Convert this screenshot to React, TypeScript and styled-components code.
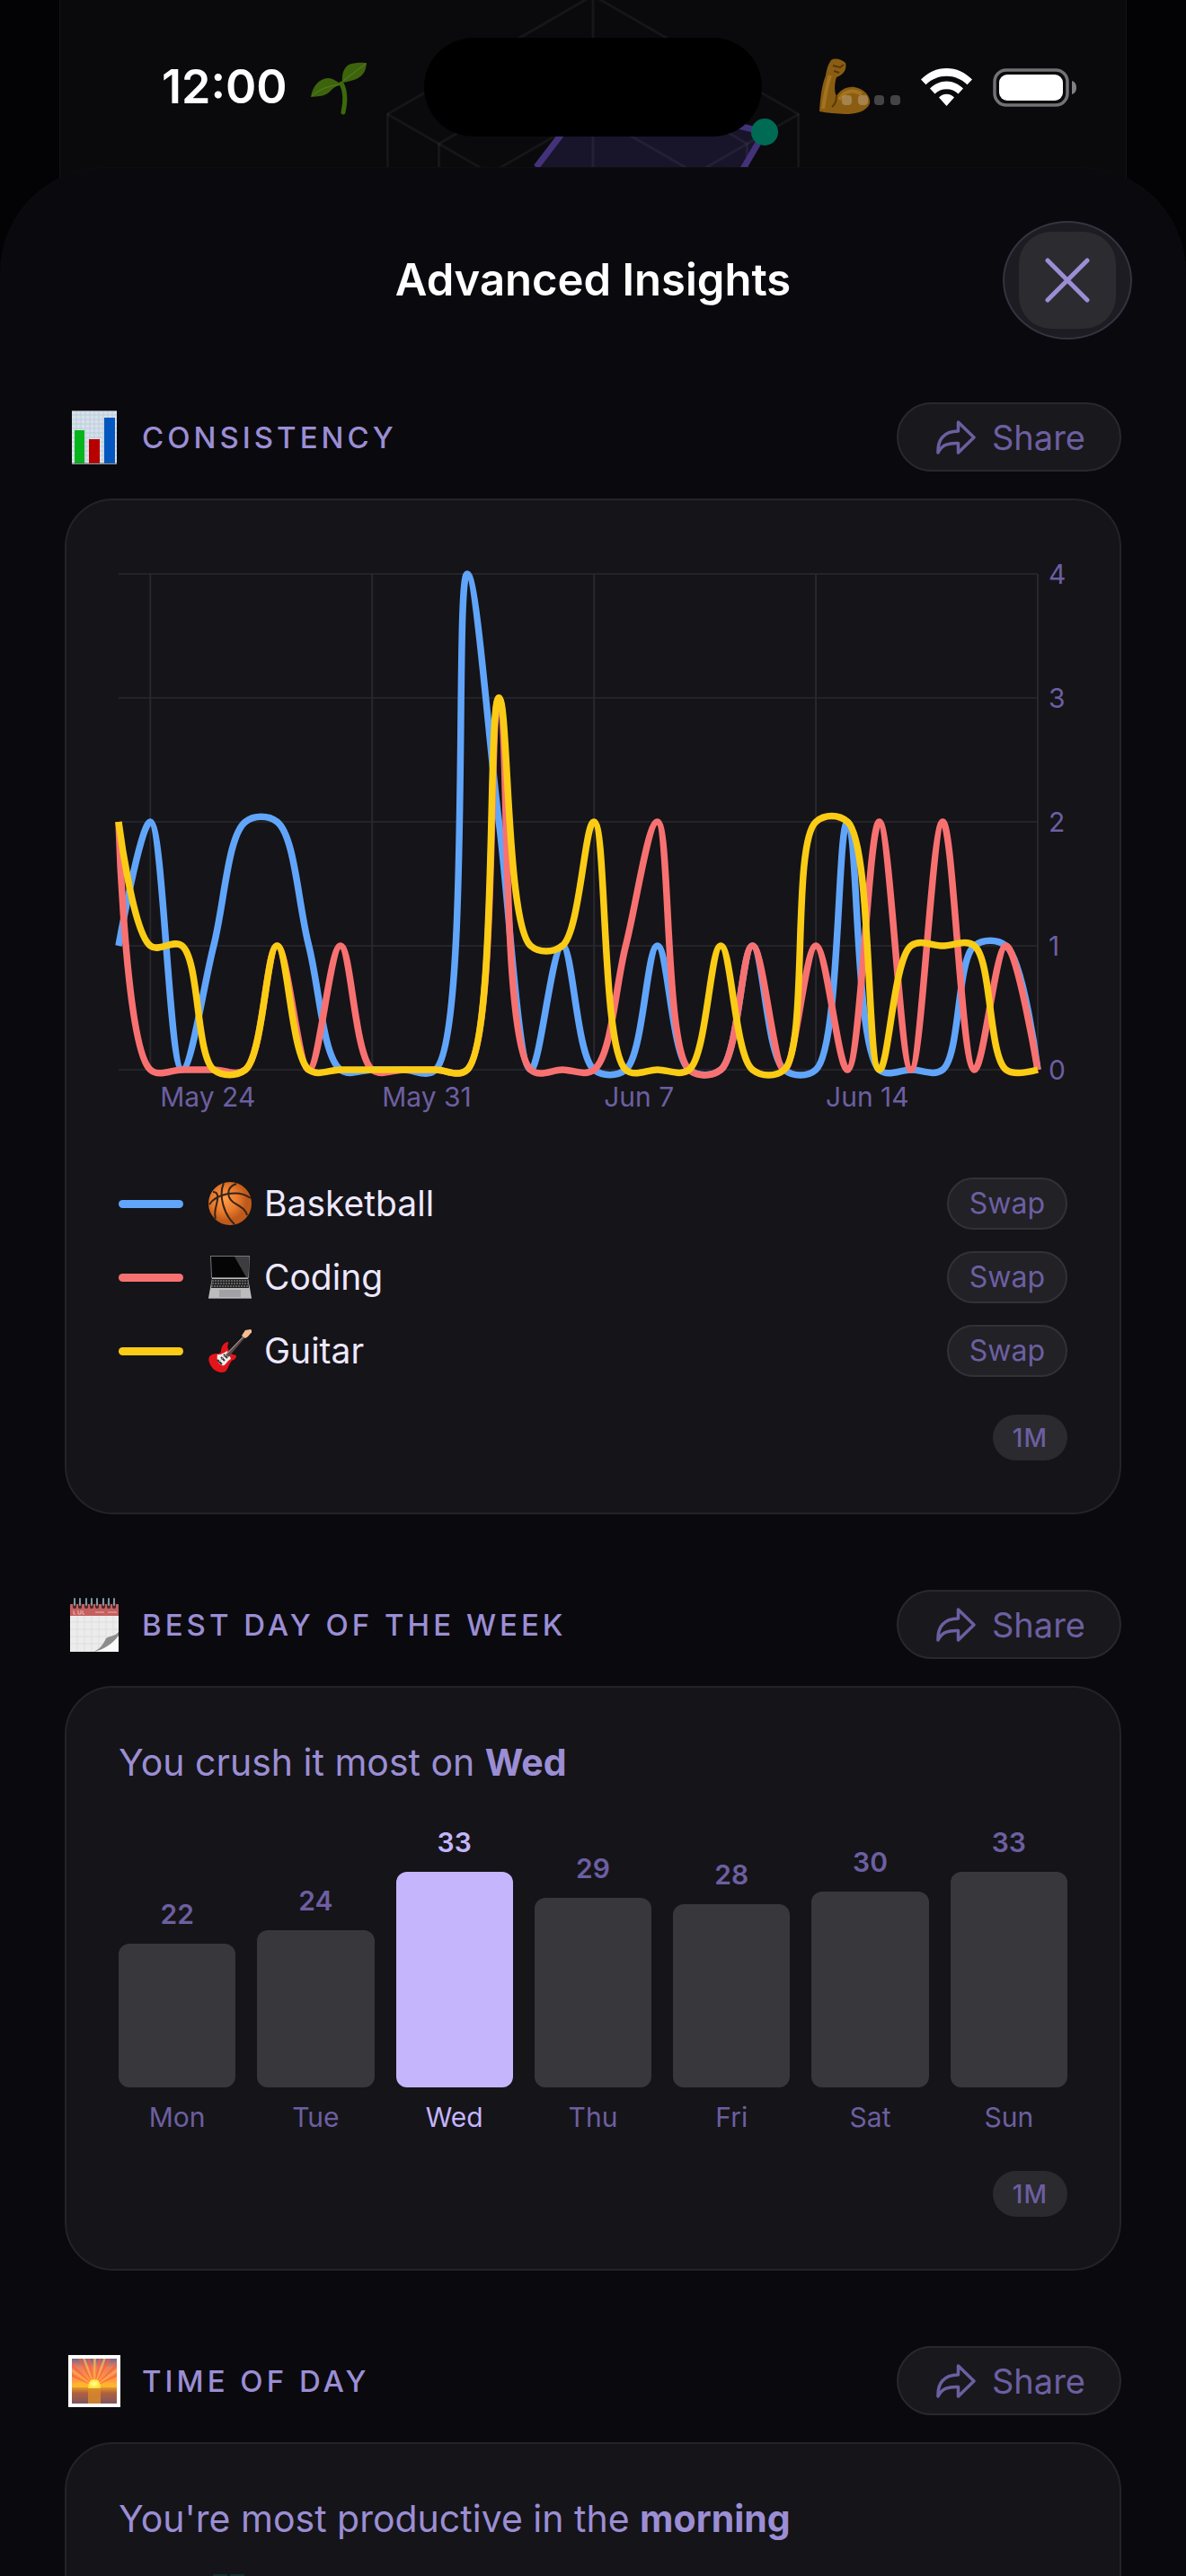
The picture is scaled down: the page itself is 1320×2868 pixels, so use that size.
import React from "react";
import styled, { createGlobalStyle } from "styled-components";

const color = {
  sheet: "#0a090e",
  card: "#151418",
  cardLine: "#242327",
  lilac: "#9b8ed4",
  muted: "#6c5fa1",
  accent: "#c4b5fd",
  text: "#ede8ff",
  blue: "#60a5fa",
  red: "#f87171",
  yellow: "#facc15",
};

const GlobalStyle = createGlobalStyle`
  *, *::before, *::after { box-sizing: border-box; }
  body {
    margin: 0;
    background: #030305;
    font-family: Inter, "Liberation Sans", sans-serif;
    color: ${color.text};
  }
  button { font: inherit; margin: 0; padding: 0; cursor: pointer; }
  svg { display: block; flex: none; }
`;

const Screen = styled.div`
  position: relative;
  display: flex;
  flex-direction: column;
  height: 100vh;
  overflow: hidden;
`;

/* The page behind the sheet, dimmed */
const Backdrop = styled.div`
  position: absolute;
  inset: 0 66px auto;
  height: 320px;
  display: flex;
  justify-content: center;
  background: #0a0a0c;
  border: solid #131315;
  border-width: 0 1px;
`;

const StatusBar = styled.header`
  position: relative;
  display: grid;
  grid-template-columns: 1fr 376px 1fr;
  align-items: center;
  padding: 42px 0 34px;
`;

const Time = styled.time`
  padding-left: 180px;
  font-size: 52px;
  line-height: 60px;
  font-weight: 600;
  color: #fff;
`;

const Island = styled.div`
  height: 110px;
  border-radius: 55px;
  background: #000;
`;

const StatusIcons = styled.div`
  display: flex;
  align-items: center;
  justify-content: flex-end;
  gap: 23px;
  padding-right: 122px;
`;

const Sheet = styled.main`
  position: relative;
  flex: 1;
  min-height: 0;
  overflow: hidden;
  border-radius: 118px 118px 0 0;
  background: ${color.sheet};
  box-shadow: inset 0 1px 0 #0e0e12;
`;

const SheetHeader = styled.div`
  display: grid;
  grid-template-columns: 1fr auto 1fr;
  align-items: center;
  padding: 60px 60px 0;
`;

const SheetTitle = styled.h1`
  grid-column: 2;
  margin: 0;
  font-size: 49px;
  line-height: 60px;
  font-weight: 600;
  color: #fff;
`;

const CloseButton = styled.button`
  justify-self: end;
  display: grid;
  place-items: center;
  width: 144px;
  height: 132px;
  border: 2px solid #34333f;
  border-radius: 72px / 66px;
  background: #1d1c22;
`;

const CloseFace = styled.span`
  display: grid;
  place-items: center;
  width: 108px;
  height: 108px;
  border-radius: 36px;
  background: #2c2b30;
`;

const Content = styled.div`
  display: flex;
  flex-direction: column;
  gap: 84px;
  padding: 70px 72px 0;
`;

const Section = styled.section`
  display: flex;
  flex-direction: column;
  gap: 30px;
`;

const SectionHeader = styled.div`
  display: flex;
  align-items: center;
  gap: 20px;
`;

const SectionTitle = styled.h2`
  flex: 1;
  margin: 0;
  font-size: 33px;
  line-height: 40px;
  font-weight: 500;
  letter-spacing: 4px;
  text-transform: uppercase;
  color: ${color.lilac};
`;

const ShareButton = styled.button`
  display: flex;
  align-items: center;
  gap: 18px;
  height: 77px;
  padding: 0 38px 0 42px;
  border: 2px solid #29282c;
  border-radius: 39px;
  background: #19181c;
  && { font-size: 38px; line-height: 48px; }
  color: ${color.muted};
`;

const Card = styled.div`
  display: flex;
  flex-direction: column;
  padding: 58px;
  border: 2px solid ${color.cardLine};
  border-radius: 54px;
  background: ${color.card};
`;

const ChartSvg = styled.svg`
  width: 100%;
  height: auto;
  overflow: visible;
`;

const AxisText = styled.text`
  font-size: 30px;
  fill: ${color.muted};
`;

const Legend = styled.ul`
  display: flex;
  flex-direction: column;
  gap: 24px;
  margin: 66px 0 0;
  padding: 0;
  list-style: none;
`;

const LegendRow = styled.li`
  display: flex;
  align-items: center;
  height: 58px;
`;

const Swatch = styled.span<{ $tone: string }>`
  width: 72px;
  height: 9px;
  margin-right: 28px;
  border-radius: 5px;
  background: ${(p) => p.$tone};
`;

const LegendName = styled.span`
  flex: 1;
  margin-left: 14px;
  font-size: 39px;
  line-height: 48px;
  color: ${color.text};
`;

const SwapButton = styled.button`
  height: 58px;
  && { padding: 0 23px; font-size: 32px; line-height: 40px; }
  border: 2px solid #323136;
  border-radius: 29px;
  background: #222126;
  color: ${color.muted};
`;

const RangeButton = styled.button`
  align-self: flex-end;
  height: 51px;
  margin-top: 42px;
  && { padding: 0 22px; font-size: 28px; line-height: 34px; font-weight: 500; }
  border: 0;
  border-radius: 26px;
  background: #2b2a2f;
  letter-spacing: 1px;
  color: ${color.muted};
`;

const Insight = styled.p`
  margin: 0;
  font-size: 41px;
  line-height: 50px;
  color: ${color.lilac};

  strong { font-weight: 700; }
`;

const Week = styled.ol`
  display: grid;
  grid-template-columns: repeat(7, 1fr);
  column-gap: 24px;
  align-items: end;
  margin: 46px 0 0;
  padding: 0;
  list-style: none;
`;

const Day = styled.li<{ $best: boolean }>`
  display: flex;
  flex-direction: column;
  gap: 15px;
  text-align: center;
  font-size: 30px;
  line-height: 36px;
  color: ${(p) => (p.$best ? color.accent : color.muted)};

  b { font-weight: 600; }
`;

const Bar = styled.div<{ $best: boolean }>`
  border-radius: 12px;
  background: ${(p) => (p.$best ? color.accent : "#38373b")};
`;

const Scene = styled.div`
  display: flex;
  gap: 3px;
  margin: 37px 0 0 105px;
`;

const SceneBlock = styled.span`
  width: 16px;
  height: 60px;
  background: #12302f;
`;

/* ---------- drawings ---------- */

const hexagon = (r: number) =>
  [0, 1, 2, 3, 4, 5]
    .map((i) => {
      const a = ((i * 60 - 90) * Math.PI) / 180;
      return `${(594 + r * Math.cos(a)).toFixed(1)},${(259 + r * Math.sin(a)).toFixed(1)}`;
    })
    .join(" ");

const Radar = () => (
  <svg width="1188" height="320" viewBox="0 0 1188 320" aria-hidden="true">
    <path d="M594 101L785 147L700 287H450Z" fill="#18142a" />
    <g fill="none" stroke="#fff" strokeOpacity="0.05" strokeWidth="3">
      {[264, 198, 132].map((r) => (
        <polygon key={r} points={hexagon(r)} />
      ))}
      <path d="M594 -5V259M365 127L594 259L823 127" />
    </g>
    <path d="M531 186L557 152L594 101L785 147L761 188" fill="none" stroke="#43327a" strokeWidth="7" />
    <circle cx="785" cy="147" r="15" fill="#006b55" />
    <g>
      <path d="M315 92C314 82 317 73 325 71C333 69 341 70 342 70C341 84 334 89 315 92Z" fill="#3d640c" />
      <path d="M280 108C282 95 290 87 300 87C307 88 310 92 315 94C308 95 305 98 300 103C294 108 287 107 280 108Z" fill="#3d640c" />
      <path d="M316 90L341 71M281 107Q292 96 314 94" fill="none" stroke="#56802a" strokeWidth="1" />
      <path d="M314 93C319 102 318 116 316 125" fill="none" stroke="#3b6a0b" strokeWidth="5" strokeLinecap="round" />
    </g>
    <g>
      <path
        d="M846 124C847 108 849 94 853 84C854 78 855 73 859 67C863 64 871 66 875 70C877 77 873 83 865 86C862 95 863 104 865 107C869 100 877 96 885 97C896 99 903 107 902 115C898 125 886 127 874 127C865 126 855 126 846 124Z"
        fill="#8a5d12"
      />
      <path d="M850 121C852 108 854 95 858 84M868 111C873 101 884 99 893 105" fill="none" stroke="#a3731f" strokeWidth="4" />
      <path d="M861 73L869 75L873 72M862 79L868 81M865 107Q865 115 860 119" fill="none" stroke="#583706" strokeWidth="2" />
    </g>
  </svg>
);

const Signal = () => (
  <svg width="65" height="42" viewBox="0 0 65 42" aria-hidden="true">
    {[0, 18, 36, 54].map((x) => (
      <rect key={x} x={x} y="30" width="11" height="11" rx="4" fill="#fff" opacity="0.24" />
    ))}
  </svg>
);

const Wifi = () => (
  <svg width="57" height="42" viewBox="0 0 57 42" aria-hidden="true" fill="#fff">
    <path d="M28.500 0C39.500 0 49 4.500 57 12.500L51.500 18.300C45 12 37 8.800 28.500 8.800C20 8.800 12 12 5.500 18.300L0 12.500C8 4.500 17.500 0 28.500 0Z" />
    <path d="M28.500 14.500C35.500 14.500 42 17.500 47 22.500L41.500 28.500C38 25 33.500 23.300 28.500 23.300C23.500 23.300 19 25 15.500 28.500L10 22.500C15 17.500 21.500 14.500 28.500 14.500Z" />
    <path d="M28.500 28.800C32 28.800 35 30.500 37 32.500L28.500 42L20 32.500C22 30.500 25 28.800 28.500 28.800Z" />
  </svg>
);

const Battery = () => (
  <svg width="93" height="43" viewBox="0 0 93 43" aria-hidden="true">
    <rect x="2" y="2" width="81" height="39" rx="13" fill="none" stroke="#727274" strokeWidth="3.500" />
    <rect x="7" y="7" width="71" height="29" rx="9" fill="#fff" />
    <path d="M88 14C91.500 15 93 18 93 21.500S91.500 28 88 29Z" fill="#808082" />
  </svg>
);

const CloseIcon = () => (
  <svg width="50" height="50" viewBox="0 0 50 50" aria-hidden="true">
    <path d="M3 3L47 47M47 3L3 47" stroke={color.lilac} strokeWidth="5" strokeLinecap="round" />
  </svg>
);

const ShareIcon = () => (
  <svg width="44" height="38" viewBox="0 0 44 38" aria-hidden="true">
    <path
      d="M24.500 2L42 19L24.500 36V25.500C14 25 6.500 27 2 36C1.500 22 8 12 24.500 12Z"
      fill="none"
      stroke={color.muted}
      strokeWidth="3.500"
      strokeLinejoin="round"
    />
  </svg>
);

const BarChartEmoji = () => (
  <svg width="66" height="60" viewBox="0 0 66 60" aria-hidden="true">
    <rect x="8" width="50" height="60" fill="#d7e1ea" />
    <path
      d="M8 5H58M8 10H58M8 15H58M8 20H58M8 25H58M8 30H58M8 35H58M8 40H58M8 45H58M8 50H58M8 55H58M13 0V60M18 0V60M23 0V60M28 0V60M33 0V60M38 0V60M43 0V60M48 0V60M53 0V60"
      stroke="#bccddd"
      strokeWidth="1"
    />
    <rect x="8" width="50" height="1" fill="#888" />
    <rect x="11" y="22" width="11" height="37" fill="#06b51b" />
    <rect x="27" y="32" width="12" height="27" fill="#b80000" />
    <rect x="44" y="8" width="12" height="51" fill="#0557c0" />
    <rect x="8" y="58" width="50" height="2" fill="#555" opacity="0.5" />
  </svg>
);

const CalendarEmoji = () => (
  <svg width="66" height="60" viewBox="0 0 66 60" aria-hidden="true">
    <rect x="6" y="7" width="54" height="53" fill="#ececec" />
    <rect x="6" y="7" width="54" height="13" fill="#c4605f" />
    <path d="M6 27H60M6 35H60M6 43H60M6 51H60M14 20V60M22 20V60M30 20V60M38 20V60M46 20V60M54 20V60" stroke="#dedede" strokeWidth="1" />
    <path d="M10 14V18H12M15 14V18H18V14M20 14V18H22M34 16H44M48 16H58" fill="none" stroke="#e8b4b3" strokeWidth="1" />
    <path d="M60 38C56 44 50 43 46 45C44 52 40 58 32 60H60Z" fill="#fafafa" />
    <path d="M60 38C56 43 51 42 46 45C43 52 38 58 32 60C44 58 54 50 60 42Z" fill="#8c8c8c" />
    {[11, 17, 24, 30, 36, 43, 49, 55].map((x) => (
      <g key={x}>
        <rect x={x - 2} y="5" width="4" height="7" rx="2" fill="#4a2426" />
        <rect x={x - 1} y="0" width="2" height="9" rx="1" fill="#7e97a5" />
      </g>
    ))}
  </svg>
);

const SunriseEmoji = () => (
  <svg width="66" height="60" viewBox="0 0 66 60" aria-hidden="true">
    <defs>
      <linearGradient id="sky" x1="0" y1="0" x2="0" y2="1">
        <stop offset="0" stopColor="#77668a" />
        <stop offset="0.3" stopColor="#e9805a" />
        <stop offset="0.7" stopColor="#ff963f" />
        <stop offset="1" stopColor="#ffc62e" />
      </linearGradient>
      <linearGradient id="sea" x1="0" y1="0" x2="0" y2="1">
        <stop offset="0" stopColor="#e39a2b" />
        <stop offset="0.35" stopColor="#b0603c" />
        <stop offset="1" stopColor="#7f5660" />
      </linearGradient>
      <radialGradient id="sun">
        <stop offset="0" stopColor="#ffffa0" />
        <stop offset="1" stopColor="#ffe02e" />
      </radialGradient>
    </defs>
    <rect x="4" y="1" width="58" height="58" fill="#fff" />
    <rect x="8" y="5" width="50" height="33" fill="url(#sky)" />
    <path
      d="M33 36L8 10V14ZM33 36L15 5H18ZM33 36L25 5H28ZM33 36L38 5H41ZM33 36L48 5H51ZM33 36L58 10V14ZM33 36L8 22V25ZM33 36L58 22V25Z"
      fill="#ff5a42"
      opacity="0.7"
    />
    <path d="M33 36L20 5H23ZM33 36L32 5H35ZM33 36L43 5H46ZM33 36L8 17V19ZM33 36L58 17V19Z" fill="#ffc04e" opacity="0.7" />
    <path d="M8 34L18 31L26 34H40L48 31L58 34V39H8Z" fill="#ffb52b" />
    <rect x="8" y="37" width="50" height="18" fill="url(#sea)" />
    <rect x="26" y="38" width="14" height="17" fill="#dc8b2b" opacity="0.8" />
    <path d="M26 38C26 31 29 28 33 28S40 31 40 38Z" fill="url(#sun)" />
  </svg>
);

const BasketballEmoji = () => (
  <svg width="48" height="48" viewBox="0 0 48 48" aria-hidden="true">
    <defs>
      <radialGradient id="ball" cx="0.38" cy="0.4">
        <stop offset="0" stopColor="#ff9b45" />
        <stop offset="0.6" stopColor="#e87a2c" />
        <stop offset="1" stopColor="#c05a1b" />
      </radialGradient>
    </defs>
    <circle cx="24" cy="24" r="24" fill="url(#ball)" />
    <path
      d="M1 25C8 14 32 7 47 18M17 1C11 15 17 36 29 47M31 2C19 6 21 17 27 22C34 27 41 29 43 37M5 11C13 11 10 21 8 29C7 34 7 38 8 41"
      fill="none"
      stroke="#33231b"
      strokeWidth="2"
    />
  </svg>
);

const LaptopEmoji = () => (
  <svg width="48" height="48" viewBox="0 0 48 48" aria-hidden="true">
    <path d="M2 0H46L45 25H3Z" fill="#777" />
    <path d="M3 1H45L44 24H4Z" fill="#050505" />
    <path d="M29 1H45L44 24H42Z" fill="#3d3d3f" />
    <path d="M4 25H44L48 47H0Z" fill="#bcbcbe" />
    <path d="M4 26H44L45 36H3Z" fill="#222" />
    <path d="M4 28H44M4 31H44M3 34H45" stroke="#999" strokeWidth="1" strokeDasharray="2 1" />
    <rect x="12" y="38" width="24" height="8" fill="#a2a2a4" />
    <path d="M0 47H48V48H0Z" fill="#88888a" />
  </svg>
);

const GuitarEmoji = () => (
  <svg width="48" height="48" viewBox="0 0 48 48" aria-hidden="true">
    <path
      d="M14 23C15 17 19 14 22 14C23 16 20 18 22 22C24 26 25 28 31 29C31 33 28 34 26 35C23 38 22 44 19 47C13 50 4 46 1 37C-2 29 5 27 10 27C13 27 14 26 14 23Z"
      fill="#e3151b"
    />
    <path d="M10 28C14 29 19 25 21 24C22 29 25 31 25 33C20 35 19 42 15 40C10 38 9 33 10 28Z" fill="#f2eeee" />
    <path d="M19 28L39 7L41 9L22 31Z" fill="#5a4a47" />
    <path d="M37 7L41 1L47 0L49 2L44 8L41 10Z" fill="#f4bd93" />
    <path d="M14 31L18 35M17 28L21 32M10 34L15 39" stroke="#333" strokeWidth="2" />
    <path d="M12 36L39 8" stroke="#b9aaa5" strokeWidth="1" />
  </svg>
);

/* ---------- consistency chart ---------- */

type Point = [number, number];

const series = [
  { name: "Basketball", tone: color.blue, Emoji: BasketballEmoji, values: [1, 2, 0, 1, 2, 2, 1, 0, 0, 0, 0, 4, 2, 0, 1, 0, 0, 1, 0, 0, 1, 0, 0, 2, 0, 0, 0, 1, 1, 0] },
  { name: "Coding", tone: color.red, Emoji: LaptopEmoji, values: [2, 0, 0, 0, 0, 1, 0, 1, 0, 0, 0, 0, 3, 0, 0, 0, 1, 2, 0, 0, 1, 0, 1, 0, 2, 0, 2, 0, 1, 0] },
  { name: "Guitar", tone: color.yellow, Emoji: GuitarEmoji, values: [2, 1, 1, 0, 0, 1, 0, 0, 0, 0, 0, 0, 3, 1, 1, 2, 0, 0, 0, 1, 0, 0, 2, 2, 0, 1, 1, 1, 0, 0] },
];

const PLOT = { width: 1023, top: 24, bottom: 576, max: 4 };
const dayX = (i: number) => (i * PLOT.width) / 29;
const valueY = (v: number) => PLOT.bottom - (v * (PLOT.bottom - PLOT.top)) / PLOT.max;

/* Centripetal Catmull-Rom spline as cubic Béziers */
function spline(points: Point[]) {
  const dist = (a: Point, b: Point) => Math.hypot(b[0] - a[0], b[1] - a[1]);
  let d = `M${points[0][0]} ${points[0][1]}`;
  for (let i = 0; i < points.length - 1; i++) {
    const p1 = points[i];
    const p2 = points[i + 1];
    const p0 = points[i - 1] ?? p1;
    const p3 = points[i + 2] ?? p2;
    const [l1, l2, l3] = [dist(p0, p1), dist(p1, p2), dist(p2, p3)];
    const [a1, a2, a3] = [Math.sqrt(l1), Math.sqrt(l2), Math.sqrt(l3)];
    const control = (near: Point, far: Point, across: Point, aNear: number, lNear: number): Point => {
      if (aNear === 0) return near;
      const k = 2 * lNear + 3 * aNear * a2 + l2;
      const n = 3 * aNear * (aNear + a2);
      return [0, 1].map((c) => (near[c] * k - far[c] * l2 + across[c] * lNear) / n) as Point;
    };
    const c1 = control(p1, p0, p2, a1, l1);
    const c2 = control(p2, p3, p1, a3, l3);
    d += `C${[...c1, ...c2, ...p2].map((n) => n.toFixed(1)).join(" ")}`;
  }
  return d;
}

const weeks = [
  { day: 1, label: "May 24" },
  { day: 8, label: "May 31" },
  { day: 15, label: "Jun 7" },
  { day: 22, label: "Jun 14" },
];

const ConsistencyChart = () => (
  <ChartSvg viewBox="0 0 1056 630" role="img" aria-label="Completions per day over the last month">
    {[0, 1, 2, 3, 4].map((v) => (
      <g key={v}>
        <path d={`M0 ${valueY(v)}H${PLOT.width}`} stroke="#242327" strokeWidth="2" />
        <AxisText x={PLOT.width + 12} y={valueY(v) + 11}>{v}</AxisText>
      </g>
    ))}
    {[1, 8, 15, 22, 29].map((i) => (
      <path key={i} d={`M${dayX(i)} ${PLOT.top}V${PLOT.bottom}`} stroke="#29282c" strokeWidth="2" />
    ))}
    {weeks.map((w) => (
      <AxisText key={w.label} x={dayX(w.day) + 11} y="617">{w.label}</AxisText>
    ))}
    {series.map((s) => (
      <path
        key={s.name}
        d={spline(s.values.map((v, i) => [dayX(i), valueY(v)] as Point))}
        fill="none"
        stroke={s.tone}
        strokeWidth="7.500"
        strokeLinejoin="round"
      />
    ))}
  </ChartSvg>
);

/* ---------- page ---------- */

const days = [
  { label: "Mon", count: 22 },
  { label: "Tue", count: 24 },
  { label: "Wed", count: 33, best: true },
  { label: "Thu", count: 29 },
  { label: "Fri", count: 28 },
  { label: "Sat", count: 30 },
  { label: "Sun", count: 33 },
];

const InsightSection = ({ icon, title, children }: { icon: React.ReactNode; title: string; children: React.ReactNode }) => (
  <Section>
    <SectionHeader>
      {icon}
      <SectionTitle>{title}</SectionTitle>
      <ShareButton type="button">
        <ShareIcon />
        Share
      </ShareButton>
    </SectionHeader>
    <Card>{children}</Card>
  </Section>
);

export default function App() {
  return (
    <Screen>
      <GlobalStyle />
      <Backdrop>
        <Radar />
      </Backdrop>
      <StatusBar>
        <Time>12:00</Time>
        <Island />
        <StatusIcons>
          <Signal />
          <Wifi />
          <Battery />
        </StatusIcons>
      </StatusBar>
      <Sheet>
        <SheetHeader>
          <SheetTitle>Advanced Insights</SheetTitle>
          <CloseButton type="button" aria-label="Close">
            <CloseFace>
              <CloseIcon />
            </CloseFace>
          </CloseButton>
        </SheetHeader>
        <Content>
          <InsightSection icon={<BarChartEmoji />} title="Consistency">
            <ConsistencyChart />
            <Legend>
              {series.map(({ name, tone, Emoji }) => (
                <LegendRow key={name}>
                  <Swatch $tone={tone} />
                  <Emoji />
                  <LegendName>{name}</LegendName>
                  <SwapButton type="button">Swap</SwapButton>
                </LegendRow>
              ))}
            </Legend>
            <RangeButton type="button">1M</RangeButton>
          </InsightSection>

          <InsightSection icon={<CalendarEmoji />} title="Best day of the week">
            <Insight>
              You crush it most on <strong>Wed</strong>
            </Insight>
            <Week>
              {days.map((d) => (
                <Day key={d.label} $best={!!d.best}>
                  <b>{d.count}</b>
                  <Bar $best={!!d.best} style={{ height: Math.round((d.count / 33) * 240) }} />
                  <span>{d.label}</span>
                </Day>
              ))}
            </Week>
            <RangeButton type="button">1M</RangeButton>
          </InsightSection>

          <InsightSection icon={<SunriseEmoji />} title="Time of day">
            <Insight>
              You're most productive in the <strong>morning</strong>
            </Insight>
            <Scene>
              <SceneBlock />
              <SceneBlock />
            </Scene>
          </InsightSection>
        </Content>
      </Sheet>
    </Screen>
  );
}
